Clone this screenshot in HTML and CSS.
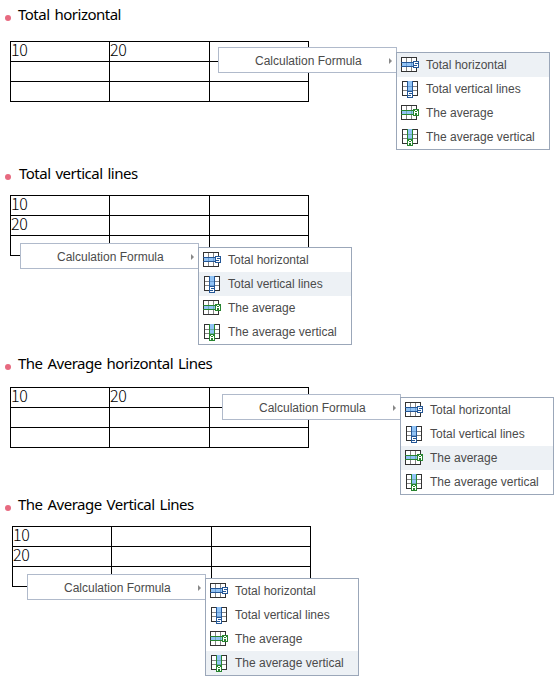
FILE: index.html
```html
<!DOCTYPE html>
<html lang="en">
<head>
<meta charset="utf-8">
<title>Calculation Formula</title>
<link rel="stylesheet" href="styles.css">
</head>
<body>
<svg class="defs" width="0" height="0" aria-hidden="true">
  <symbol id="grid" viewBox="0 0 16 15">
    <path fill="#fff" d="M0 0h16v15H0z"/>
    <path stroke="#858585" fill="none" d="M5.5 1v13M10.5 1v13M1 5.5h14M1 9.5h14"/>
    <path stroke="#333" fill="none" d="M.5 .5h15v14H.5z"/>
  </symbol>
  <symbol id="s" viewBox="0 0 6 7">
    <path fill="currentColor" d="M0 0h6v7H0z"/>
    <path stroke="#fff" fill="none" d="M5 1.5H1.5v2h3v2H1"/>
  </symbol>
  <symbol id="a" viewBox="0 0 6 7">
    <path fill="currentColor" d="M0 0h6v7H0z"/>
    <path stroke="#fff" fill="none" d="M1.5 6V2M2 1.5h2M4.5 2v4M2 3.5h2"/>
  </symbol>
  <symbol id="row" viewBox="0 0 20 18">
    <use href="#grid" x="0" y="1" width="16" height="15"/>
    <path fill="#91c3f5" d="M1 7h14v3H1z"/>
    <path stroke="currentColor" fill="none" d="M0 6.5h16M0 10.5h16"/>
    <path stroke="currentColor" fill="none" opacity=".35" d="M5.5 7v3M10.5 7v3"/>
  </symbol>
  <symbol id="col" viewBox="0 0 20 18">
    <use href="#grid" x="1" y="1" width="16" height="15"/>
    <path fill="#91c3f5" d="M7 1h4v14H7z"/>
    <path stroke="currentColor" fill="none" d="M6.5 1v15M11.5 1v15"/>
    <path stroke="currentColor" fill="none" opacity=".35" d="M7 6.5h4M7 10.5h4"/>
  </symbol>
  <symbol id="row-s" viewBox="0 0 20 18"><use href="#row" width="20" height="18"/><use href="#s" x="12" y="5" width="6" height="7"/></symbol>
  <symbol id="col-s" viewBox="0 0 20 18"><use href="#col" width="20" height="18"/><use href="#s" x="6" y="11" width="6" height="7"/></symbol>
  <symbol id="row-a" viewBox="0 0 20 18"><use href="#row" width="20" height="18"/><use href="#a" x="12" y="5" width="6" height="7"/></symbol>
  <symbol id="col-a" viewBox="0 0 20 18"><use href="#col" width="20" height="18"/><use href="#a" x="6" y="11" width="6" height="7"/></symbol>
</svg>

<section class="example first">
  <h2>Total horizontal</h2>
  <table>
    <tr><td>10</td><td>20</td><td></td></tr>
    <tr><td></td><td></td><td></td></tr>
    <tr><td></td><td></td><td></td></tr>
  </table>
  <div class="popup">
    <div class="trigger">Calculation Formula</div>
    <ul class="menu">
      <li class="active"><svg class="blue"><use href="#row-s"/></svg>Total horizontal</li>
      <li><svg class="blue"><use href="#col-s"/></svg>Total vertical lines</li>
      <li><svg class="green"><use href="#row-a"/></svg>The average</li>
      <li><svg class="green"><use href="#col-a"/></svg>The average vertical</li>
    </ul>
  </div>
</section>

<section class="example second">
  <h2>Total vertical lines</h2>
  <table>
    <tr><td>10</td><td></td><td></td></tr>
    <tr><td>20</td><td></td><td></td></tr>
    <tr><td></td><td></td><td></td></tr>
  </table>
  <div class="popup">
    <div class="trigger">Calculation Formula</div>
    <ul class="menu">
      <li><svg class="blue"><use href="#row-s"/></svg>Total horizontal</li>
      <li class="active"><svg class="blue"><use href="#col-s"/></svg>Total vertical lines</li>
      <li><svg class="green"><use href="#row-a"/></svg>The average</li>
      <li><svg class="green"><use href="#col-a"/></svg>The average vertical</li>
    </ul>
  </div>
</section>

<section class="example third">
  <h2>The Average horizontal Lines</h2>
  <table>
    <tr><td>10</td><td>20</td><td></td></tr>
    <tr><td></td><td></td><td></td></tr>
    <tr><td></td><td></td><td></td></tr>
  </table>
  <div class="popup">
    <div class="trigger">Calculation Formula</div>
    <ul class="menu">
      <li><svg class="blue"><use href="#row-s"/></svg>Total horizontal</li>
      <li><svg class="blue"><use href="#col-s"/></svg>Total vertical lines</li>
      <li class="active"><svg class="green"><use href="#row-a"/></svg>The average</li>
      <li><svg class="green"><use href="#col-a"/></svg>The average vertical</li>
    </ul>
  </div>
</section>

<section class="example fourth">
  <h2>The Average Vertical Lines</h2>
  <table>
    <tr><td>10</td><td></td><td></td></tr>
    <tr><td>20</td><td></td><td></td></tr>
    <tr><td></td><td></td><td></td></tr>
  </table>
  <div class="popup">
    <div class="trigger">Calculation Formula</div>
    <ul class="menu">
      <li><svg class="blue"><use href="#row-s"/></svg>Total horizontal</li>
      <li><svg class="blue"><use href="#col-s"/></svg>Total vertical lines</li>
      <li><svg class="green"><use href="#row-a"/></svg>The average</li>
      <li class="active"><svg class="green"><use href="#col-a"/></svg>The average vertical</li>
    </ul>
  </div>
</section>
</body>
</html>
```
FILE: styles.css
```css
* { box-sizing: border-box; }

body {
  margin: 0;
  height: 680px;
  overflow: hidden;
  background: #fff;
  display: grid;
  grid-template-rows: 160px 190px 140px 190px;
}

.defs { position: absolute; }

.example { position: relative; padding-left: 10px; }

h2 {
  position: relative;
  margin: 0 0 0 8px;
  height: 20px;
  font: 400 15px/20px "Noto Sans", sans-serif;
  letter-spacing: -0.5px;
  word-spacing: 1.5px;
  color: #000;
  white-space: nowrap;
}

h2::before {
  content: "";
  position: absolute;
  left: -13px;
  top: 11px;
  width: 6px;
  height: 6px;
  border-radius: 50%;
  background: #e76a80;
}

table {
  width: 299px;
  table-layout: fixed;
  border-collapse: separate;
  border-spacing: 0;
  border-left: 1px solid #000;
  border-top: 1px solid #000;
}

td {
  height: 20px;
  padding: 0;
  border-right: 1px solid #000;
  border-bottom: 1px solid #000;
  font: 300 16px/15px "Noto Sans CJK KR", sans-serif;
  letter-spacing: -0.3px;
  color: #000;
  vertical-align: top;
}

td:nth-child(1), td:nth-child(3) { width: 99px; }
td:nth-child(2) { width: 100px; }

.first { padding-top: 4px; }
.first table { margin-top: 17px; }
.second { padding-top: 3px; }
.second table { margin-top: 12px; }
.third { padding-top: 3px; }
.third table { margin-top: 14px; }
.fourth { padding-top: 4px; }
.fourth table { margin: 12px 0 0 2px; }
.second h2 { margin-left: 9px; }
.second h2::before { left: -14px; }

.popup {
  position: absolute;
  display: flex;
  align-items: flex-start;
  font: 12px/24px "Liberation Sans", Arial, sans-serif;
  color: #4b4b4b;
}

.first .popup { left: 218px; top: 47px; }
.second .popup { left: 20px; top: 83px; }
.third .popup { left: 222px; top: 44px; }
.fourth .popup { left: 27px; top: 84px; }

.trigger {
  position: relative;
  width: 179px;
  height: 26px;
  padding: 1px 0 0 36px;
  border: 1px solid #b0bacb;
  background: #fff;
  white-space: nowrap;
}

.trigger::after {
  content: "";
  position: absolute;
  right: 4px;
  top: 10px;
  border: solid transparent;
  border-width: 3px 0 3px 3px;
  border-left-color: #888;
}

.menu {
  position: relative;
  list-style: none;
  width: 154px;
  margin: 4px 0 0 -1px;
  padding: 0;
  border: 1px solid #9ba7b9;
  background: #fff;
}

.first .menu { margin-top: 5px; }
.third .menu { margin-top: 3px; }

.menu li {
  display: flex;
  height: 24px;
  padding-left: 4px;
  white-space: nowrap;
}

.menu .active { background: #edf1f5; }

.menu svg {
  flex: none;
  width: 20px;
  height: 18px;
  margin: 3px 5px 0 0;
  shape-rendering: crispEdges;
}

.blue { color: #245797; }
.green { color: #27842f; }
```
